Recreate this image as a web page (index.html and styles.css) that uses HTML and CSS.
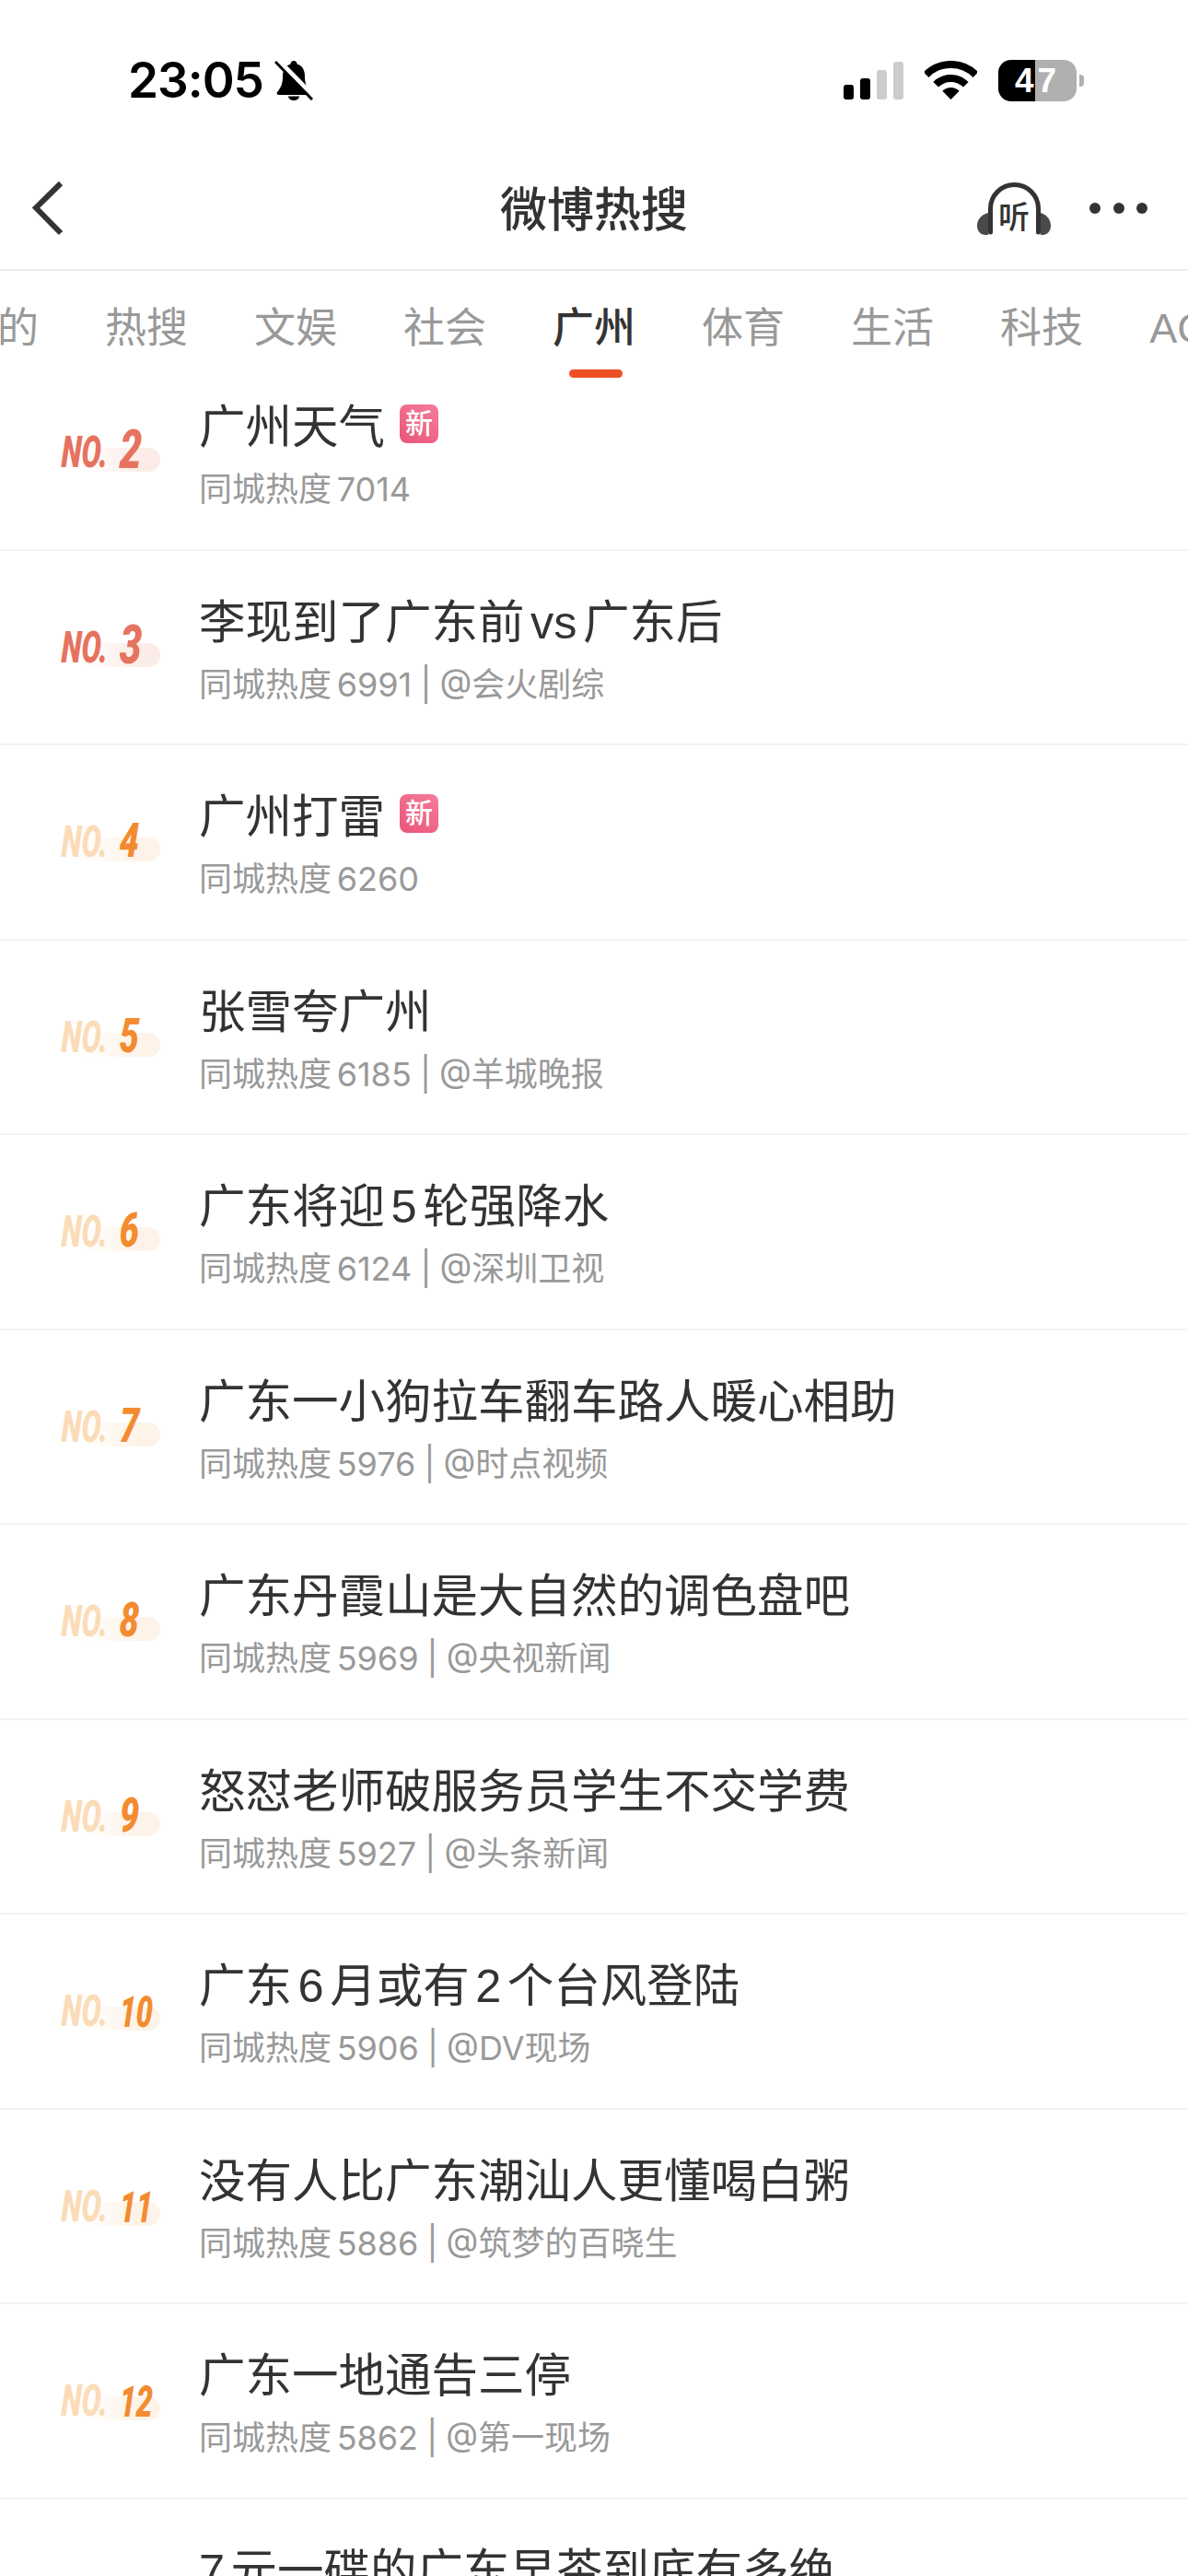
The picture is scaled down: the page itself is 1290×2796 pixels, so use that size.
FILE: index.html
```html
<!DOCTYPE html>
<html lang="zh-CN">
<head>
  <meta charset="UTF-8" />
  <title>微博热搜</title>
  <link rel="stylesheet" href="styles.css">
</head>
<body>
  <div class="page">
    <div class="status">
      <div class="status-left">
        <span class="time">23:05</span>
        <svg class="bell" viewBox="0 0 42 44" width="42" height="44">
          <path d="M21 1c-2 0-3.5 1.5-3.5 3.5C11 6.5 9 12 9 18c0 8-2 12-6 17-1 2 0 3 2 3h32c2 0 3-1 2-3-4-5-6-9-6-17 0-6-2-11.500-8.500-13.500C24.500 2.500 23 1 21 1z" fill="#000"/>
          <path d="M15 39.500a6 4.500 0 0 0 12 0z" fill="#000"/>
          <path d="M4 0L44 41" stroke="#fff" stroke-width="5"/>
          <path d="M1 2L41 43" stroke="#000" stroke-width="3"/>
        </svg>
      </div>
      <div class="status-right">
        <div class="signal">
          <i class="bar bar1"></i><i class="bar bar2"></i><i class="bar bar3"></i><i class="bar bar4"></i>
        </div>
        <svg class="wifi" viewBox="0 0 57 42" width="57" height="42">
          <path d="M1.600 15.100A38 38 0 0 1 55.400 15.100" fill="none" stroke="#000" stroke-width="8"/>
          <path d="M12.200 25.700A23 23 0 0 1 44.800 25.700" fill="none" stroke="#000" stroke-width="8"/>
          <path d="M28.500 42L19.300 32.800A13 13 0 0 1 37.700 32.800z" fill="#000"/>
        </svg>
        <div class="battery">
          <span class="battery-body">47</span>
          <span class="battery-nub"></span>
        </div>
      </div>
    </div>

    <div class="nav">
      <div class="nav-left">
        <svg viewBox="0 0 36 60" width="36" height="60">
          <path d="M32 3L5 29.500L32 57" fill="none" stroke="#333" stroke-width="6"/>
        </svg>
      </div>
      <div class="nav-title">微博热搜</div>
      <div class="nav-right">
        <svg class="listen" viewBox="0 0 80 57" width="80" height="57">
          <path d="M12 33C4 35 0 41 0 47c0 6 4 10 9 10h3z" fill="#4a4a4a"/>
          <path d="M69 33c7 2 11 8 11 14 0 6-4 10-9 10h-2z" fill="#4a4a4a"/>
          <path d="M14.500 54V28.500A26 26 0 0 1 66.500 28.500V54" fill="none" stroke="#333" stroke-width="5" stroke-linecap="round"/>
          <text x="40" y="50" text-anchor="middle" class="listen-text">听</text>
        </svg>
        <div class="dots"><i></i><i></i><i></i></div>
      </div>
    </div>

    <div class="tabs">
      <span class="tab">我的</span>
      <span class="tab">热搜</span>
      <span class="tab">文娱</span>
      <span class="tab">社会</span>
      <span class="tab active">广州</span>
      <span class="tab">体育</span>
      <span class="tab">生活</span>
      <span class="tab">科技</span>
      <span class="tab">ACG</span>
    </div>

    <div class="list">
      <div class="row">
        <div class="rank hot"><span class="no">NO.</span><span class="num big">2</span></div>
        <div class="info">
          <div class="title">广州天气<span class="tag">新</span></div>
          <div class="sub"><span class="sub-label">同城热度</span> 7014</div>
        </div>
      </div>
      <div class="row">
        <div class="rank hot"><span class="no">NO.</span><span class="num big">3</span></div>
        <div class="info">
          <div class="title">李现到了广东前 vs 广东后</div>
          <div class="sub"><span class="sub-label">同城热度</span> 6991 | @会火剧综</div>
        </div>
      </div>
      <div class="row">
        <div class="rank"><span class="no">NO.</span><span class="num">4</span></div>
        <div class="info">
          <div class="title">广州打雷<span class="tag">新</span></div>
          <div class="sub"><span class="sub-label">同城热度</span> 6260</div>
        </div>
      </div>
      <div class="row">
        <div class="rank"><span class="no">NO.</span><span class="num">5</span></div>
        <div class="info">
          <div class="title">张雪夸广州</div>
          <div class="sub"><span class="sub-label">同城热度</span> 6185 | @羊城晚报</div>
        </div>
      </div>
      <div class="row">
        <div class="rank"><span class="no">NO.</span><span class="num">6</span></div>
        <div class="info">
          <div class="title">广东将迎 5 轮强降水</div>
          <div class="sub"><span class="sub-label">同城热度</span> 6124 | @深圳卫视</div>
        </div>
      </div>
      <div class="row">
        <div class="rank"><span class="no">NO.</span><span class="num">7</span></div>
        <div class="info">
          <div class="title">广东一小狗拉车翻车路人暖心相助</div>
          <div class="sub"><span class="sub-label">同城热度</span> 5976 | @时点视频</div>
        </div>
      </div>
      <div class="row">
        <div class="rank"><span class="no">NO.</span><span class="num">8</span></div>
        <div class="info">
          <div class="title">广东丹霞山是大自然的调色盘吧</div>
          <div class="sub"><span class="sub-label">同城热度</span> 5969 | @央视新闻</div>
        </div>
      </div>
      <div class="row">
        <div class="rank"><span class="no">NO.</span><span class="num">9</span></div>
        <div class="info">
          <div class="title">怒怼老师破服务员学生不交学费</div>
          <div class="sub"><span class="sub-label">同城热度</span> 5927 | @头条新闻</div>
        </div>
      </div>
      <div class="row">
        <div class="rank"><span class="no">NO.</span><span class="num small">10</span></div>
        <div class="info">
          <div class="title">广东 6 月或有 2 个台风登陆</div>
          <div class="sub"><span class="sub-label">同城热度</span> 5906 | @DV现场</div>
        </div>
      </div>
      <div class="row">
        <div class="rank"><span class="no">NO.</span><span class="num small">11</span></div>
        <div class="info">
          <div class="title">没有人比广东潮汕人更懂喝白粥</div>
          <div class="sub"><span class="sub-label">同城热度</span> 5886 | @筑梦的百晓生</div>
        </div>
      </div>
      <div class="row">
        <div class="rank"><span class="no">NO.</span><span class="num small">12</span></div>
        <div class="info">
          <div class="title">广东一地通告三停</div>
          <div class="sub"><span class="sub-label">同城热度</span> 5862 | @第一现场</div>
        </div>
      </div>
      <div class="row">
        <div class="rank"><span class="no">NO.</span><span class="num small">13</span></div>
        <div class="info">
          <div class="title">7 元一碟的广东早茶到底有多绝</div>
        </div>
      </div>
    </div>
  </div>
</body>
</html>
```

FILE: styles.css
```css
* { box-sizing: border-box; }
html, body { margin: 0; padding: 0; background: #fff; }
body { font-family: "Liberation Sans", "Noto Sans CJK SC", sans-serif; color: #333; }
.page { width: 1290px; height: 2796px; overflow: hidden; background: #fff; }

/* status bar */
.status { height: 174px; padding: 0 113px 0 139px; display: flex; justify-content: space-between; align-items: center; }
.status-left { display: flex; align-items: center; gap: 12px; }
.time { font-family: Inter, sans-serif; font-size: 53px; font-weight: 600; color: #000; letter-spacing: -1px; line-height: 60px; }
.status-right { display: flex; align-items: center; gap: 23px; }
.signal { display: flex; align-items: flex-end; gap: 7px; height: 41px; }
.bar { display: block; width: 11px; border-radius: 3px; background: #000; }
.bar1 { height: 16px; }
.bar2 { height: 23px; }
.bar3 { height: 32px; background: #ccc; }
.bar4 { height: 41px; background: #ccc; }
.battery { display: flex; align-items: center; gap: 3px; }
.battery-body { width: 85px; height: 45px; border-radius: 14px; background: linear-gradient(90deg, #000 46.500%, #b0b0b0 46.500%); color: #fff; font-size: 37px; font-weight: 700; letter-spacing: 4px; line-height: 45px; text-align: center; }
.battery-nub { width: 5px; height: 13px; border-radius: 0 4px 4px 0; background: #b0b0b0; }

/* nav */
.nav { height: 120px; padding-bottom: 14px; display: grid; grid-template-columns: 1fr auto 1fr; align-items: center; border-bottom: 2px solid #ececec; }
.nav-left { padding-left: 34px; display: flex; }
.nav-title { font-size: 51px; font-weight: 500; color: #333; line-height: 60px; padding-top: 6px; }
.nav-right { display: flex; justify-content: flex-end; align-items: center; gap: 42px; padding-right: 44px; }
.listen-text { font-family: "Noto Sans CJK SC", sans-serif; font-size: 34px; font-weight: 500; fill: #333; }
.dots { display: flex; gap: 13.500px; }
.dots i { display: block; width: 12px; height: 12px; border-radius: 50%; background: #333; }

/* tabs */
.tabs { display: flex; gap: 72px; height: 117px; margin-left: -48px; white-space: nowrap; overflow: visible; }
.tab { position: relative; font-size: 45px; line-height: 60px; padding-top: 33px; color: #999; }
.tab.active { color: #333; font-weight: 500; }
.tab.active::after { content: ""; position: absolute; left: 18px; right: 14px; top: 107px; height: 9px; border-radius: 5px; background: #ef4f24; }

/* list */
.list { margin-top: -25px; }
.row { height: 211.500px; border-bottom: 2px solid #f3f3f3; display: flex; padding-left: 66px; }
.rank { position: relative; flex: 0 0 150px; height: 60px; margin-top: 71px; display: flex; align-items: flex-end; color: #e5735f; }
.rank::before { content: ""; position: absolute; left: 24px; top: 29px; width: 84px; height: 26px; border-radius: 0 13px 13px 0; background: linear-gradient(90deg, rgba(251, 235, 230, 0), #fbece8 70%); }
.rank span { position: relative; font-family: Roboto, sans-serif; font-style: italic; font-weight: 900; transform-origin: left bottom; line-height: 1; }
.no { flex: 0 0 63px; width: 63px; min-width: 0; font-size: 48px; height: 50px; transform: scaleX(.66) skewX(-3deg); color: #fbdcb8; }
.hot .no { color: #e5735f; }
.num { font-size: 52px; margin-bottom: 1px; color: #f38b30; transform: scaleX(.72) skewX(-3deg); }
.hot .num { color: #e5735f; font-size: 59px; margin-bottom: 0; }
.num.small { font-size: 47px; margin-bottom: 2px; transform: scaleX(.68) skewX(-3deg); }
.rank:not(.hot)::before { background: linear-gradient(90deg, rgba(253, 243, 232, 0), #fdf3e8 70%); }

.info { flex: 1; padding-top: 38px; }
.title { display: flex; align-items: center; height: 70px; font-size: 50.500px; color: #333; white-space: nowrap; word-spacing: -7.500px; }
.tag { width: 42px; height: 42px; margin-left: 16px; margin-top: 2px; border-radius: 8px; background: linear-gradient(35deg, #ea5577, #f37c9c); color: #fff; font-size: 30px; font-weight: 500; line-height: 42px; text-align: center; }
.sub { margin-top: 15px; height: 44px; font-family: Inter, "Noto Sans CJK SC", sans-serif; font-size: 36px; line-height: 44px; color: #999; word-spacing: -1px; white-space: nowrap; }
.sub-label { margin-right: -3.500px; }
```
